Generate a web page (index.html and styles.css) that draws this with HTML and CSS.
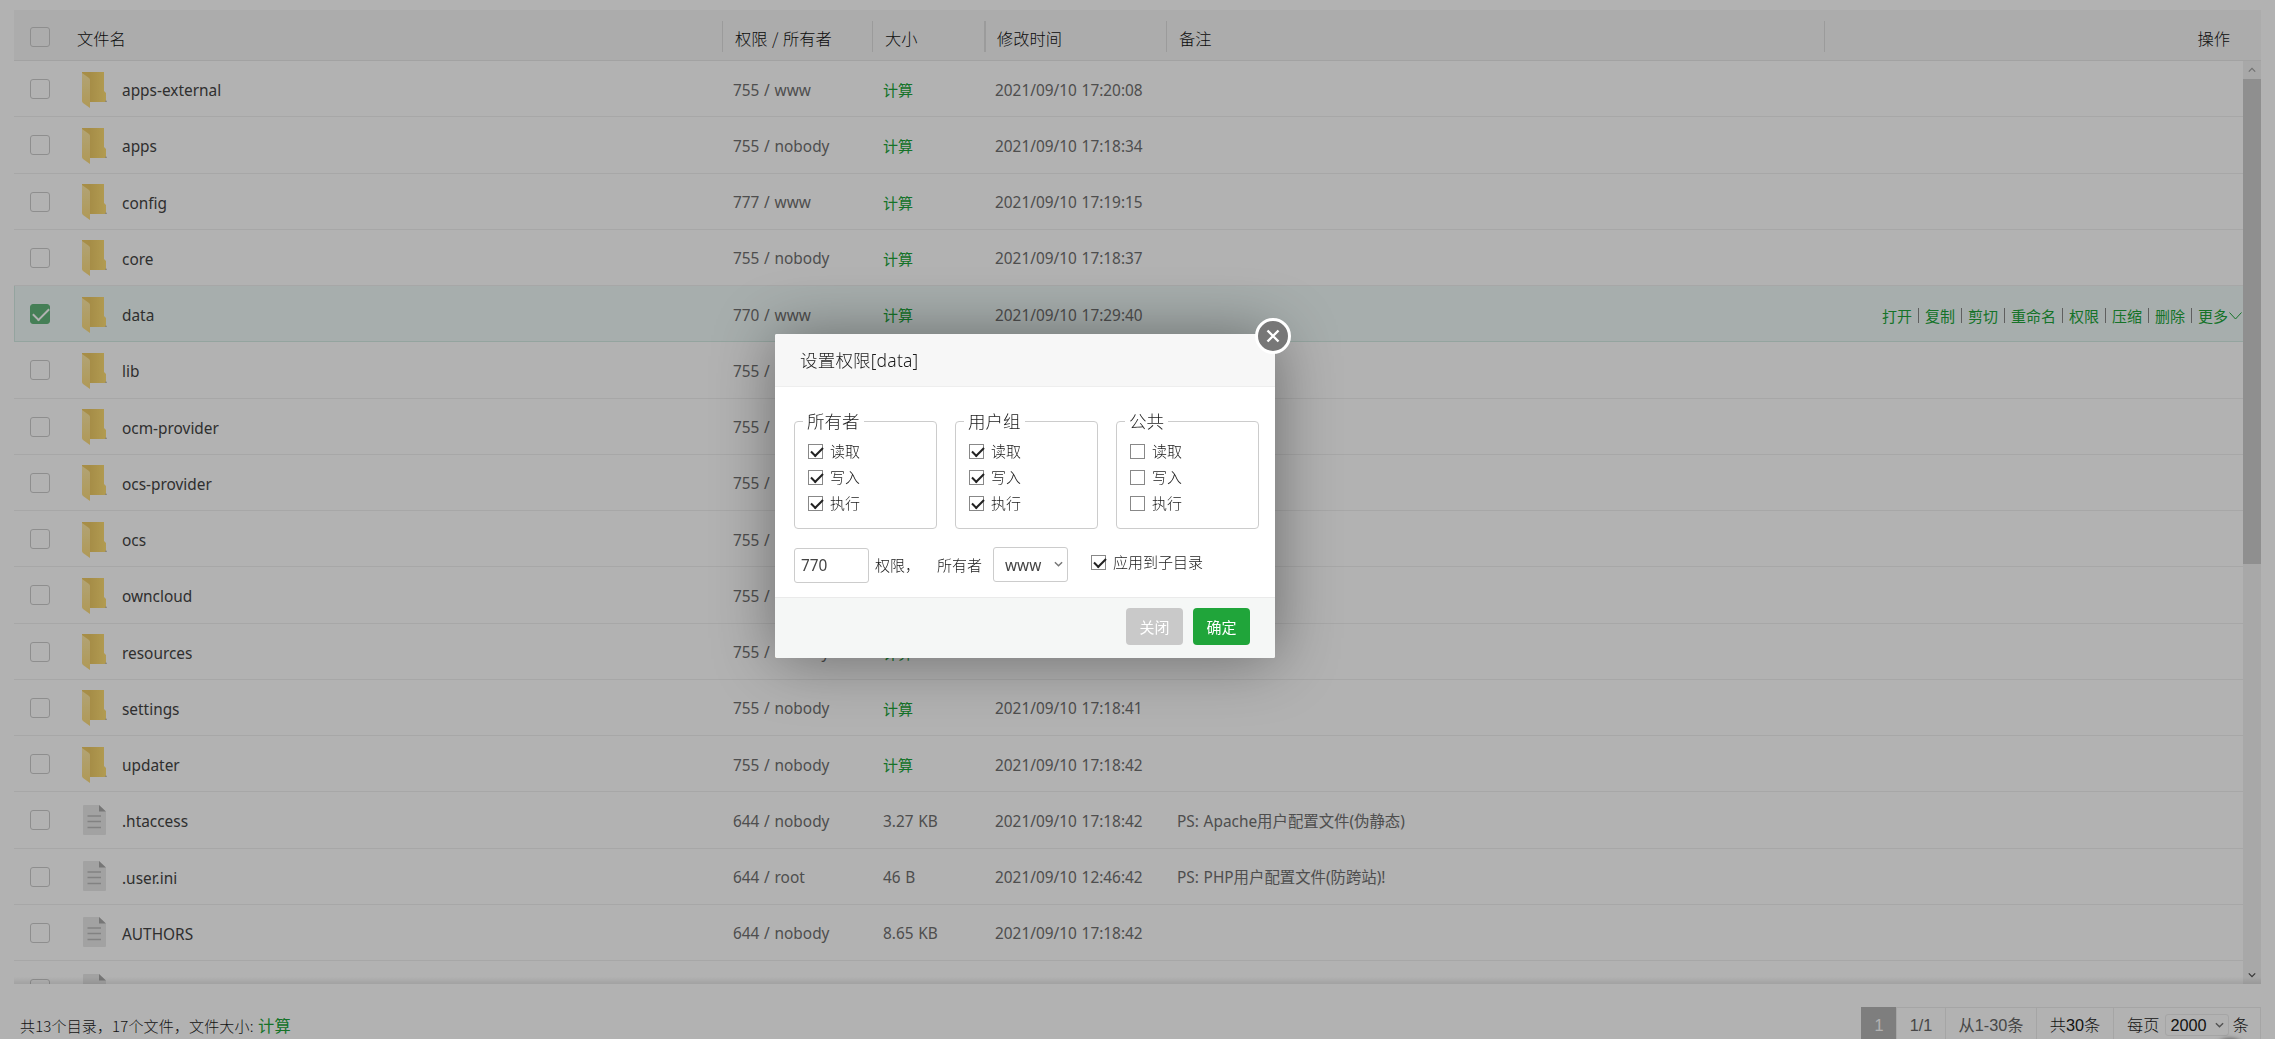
FILE: index.html
```html
<!DOCTYPE html>
<html lang="zh-CN">
<head>
    <meta charset="UTF-8">
    <meta name="viewport" content="width=device-width, initial-scale=1.0">
    <title>文件管理</title>
    <link rel="stylesheet" href="styles.css">
</head>
<body>
    <svg class="sprite" aria-hidden="true">
        <defs>
            <linearGradient id="folderBack" x1="0" y1="0" x2="1" y2="0">
                <stop offset="0" stop-color="#f0cc66"/>
                <stop offset="0.35" stop-color="#eecb66"/>
                <stop offset="1" stop-color="#ffdf76"/>
            </linearGradient>
            <linearGradient id="folderFront" x1="0" y1="0" x2="0" y2="1">
                <stop offset="0" stop-color="#ffeaa8"/>
                <stop offset="1" stop-color="#fbdb7c"/>
            </linearGradient>
        </defs>
        <symbol id="icon-folder" viewBox="0 0 25 36">
            <path fill="url(#folderBack)" d="M0 0H22V19L24 21V30H8L0 20Z"/>
            <path fill="url(#folderFront)" d="M0 1L7 6Q8 7 8 8V36L1 31Q0 30 0 29Z"/>
            <path fill="#bfb9a8" d="M24 28L25 30H23Z"/>
        </symbol>
        <symbol id="icon-file" viewBox="0 0 25 36">
            <path fill="#e8e8e8" d="M2 2H17L24 9V31Q24 32 23 32H2Q1 32 1 31V3Q1 2 2 2Z"/>
            <path fill="#aaa" d="M17 2L24 8.5H17Z"/>
            <path stroke="#bbb" stroke-width="1.5" d="M5.5 13H19M5.5 18.5H19M5.5 24.5H19"/>
        </symbol>
        <symbol id="icon-down" viewBox="0 0 10 6">
            <path fill="none" stroke="currentColor" stroke-width="1.6" d="M1 1L5 5L9 1"/>
        </symbol>
        <symbol id="icon-more" viewBox="0 0 13 8">
            <path fill="none" stroke="currentColor" d="M0.5 0.5L6.5 7L12.5 0.5"/>
        </symbol>
    </svg>

    <div class="file-page">
        <div class="file-table">
            <div class="file-row file-head">
                <div class="col-check"><input type="checkbox" class="check"></div>
                <div class="col-name">文件名</div>
                <div class="col">权限 / 所有者</div>
                <div class="col">大小</div>
                <div class="col col-time">修改时间</div>
                <div class="col">备注</div>
                <div class="col col-action">操作</div>
            </div>
            <div class="file-scroll">
                <div class="file-list" id="fileList"></div>
                <div class="scrollbar">
                    <svg class="bar-arrow up"><use href="#icon-down"/></svg>
                    <div class="bar-thumb"></div>
                    <svg class="bar-arrow down"><use href="#icon-down"/></svg>
                </div>
            </div>
        </div>

        <div class="file-footer">
            <div class="file-total">共13个目录，17个文件，文件大小: <a class="link">计算</a></div>
            <div class="page">
                <span class="page-current">1</span>
                <span class="page-num">1/1</span>
                <span class="page-range">从1-30条</span>
                <span class="page-count">共30条</span>
                <span class="page-size">每页<span class="size-select">2000<svg><use href="#icon-down"/></svg></span>条</span>
            </div>
        </div>
        <div class="float-btn"></div>
    </div>

    <div class="mask"></div>

    <div class="layer">
        <div class="layer-title">设置权限[data]</div>
        <span class="layer-close">
            <svg viewBox="0 0 14 14"><path d="M1.5 1.5L12.5 12.5M12.5 1.5L1.5 12.5"/></svg>
        </span>
        <div class="layer-content">
            <div class="groups">
                <fieldset>
                    <legend>所有者</legend>
                    <label><input type="checkbox" class="box" checked>读取</label>
                    <label><input type="checkbox" class="box" checked>写入</label>
                    <label><input type="checkbox" class="box" checked>执行</label>
                </fieldset>
                <fieldset>
                    <legend>用户组</legend>
                    <label><input type="checkbox" class="box" checked>读取</label>
                    <label><input type="checkbox" class="box" checked>写入</label>
                    <label><input type="checkbox" class="box" checked>执行</label>
                </fieldset>
                <fieldset>
                    <legend>公共</legend>
                    <label><input type="checkbox" class="box">读取</label>
                    <label><input type="checkbox" class="box">写入</label>
                    <label><input type="checkbox" class="box">执行</label>
                </fieldset>
            </div>
            <div class="setting">
                <input type="text" class="access" value="770">
                <span class="access-label">权限，</span>
                <span class="owner-label">所有者</span>
                <span class="owner">www<svg><use href="#icon-down"/></svg></span>
                <label class="sub-dir"><input type="checkbox" class="box" checked>应用到子目录</label>
            </div>
        </div>
        <div class="layer-footer">
            <button class="btn btn-close">关闭</button>
            <button class="btn btn-ok">确定</button>
        </div>
    </div>

    <script src="script.js"></script>
</body>
</html>
```
FILE: styles.css
```css
* {
    box-sizing: border-box;
}

body {
    margin: 0;
    height: 1039px;
    overflow: hidden;
    background: #fff;
    color: #1a1a1a;
    font-family: "Noto Sans", "Noto Sans CJK SC", sans-serif;
    font-size: 15px;
}

.sprite {
    position: absolute;
    width: 0;
    height: 0;
}

.link {
    color: #20a53a;
}

.file-page {
    padding: 10px 14px 0;
}

/* file table */
.file-table {
    width: 2247px;
    height: 974px;
    overflow: hidden;
}

.file-row {
    display: grid;
    grid-template-columns: 63px 645px 150px 112px 182px 658px 1fr;
    align-items: center;
    height: 56.25px;
    border-bottom: 1px solid #efefef;
    color: #707070;
    font-size: 15.4px;
    line-height: 24px;
}

.file-head {
    height: 51px;
    background: #f6f6f6;
    border-bottom: 1px solid #e8e8e8;
    color: #111;
    font-size: 16.25px;
    font-family: "Noto Sans CJK SC", sans-serif;
    font-weight: 300;
    word-spacing: 1px;
}

.file-head .col {
    align-self: start;
    height: 31px;
    margin-top: 11px;
    padding: 2px 0 0 12px;
    border-left: 1px solid #dfdfdf;
    line-height: 31px;
}

.file-head .col-name {
    padding-top: 5px;
}

.file-head .col-time {
    padding-left: 11px;
    border-left: 2px solid #dfdfdf;
}

.file-head .col-action {
    padding-right: 31px;
    text-align: right;
}

.col-check {
    padding-left: 16px;
}

.check {
    appearance: none;
    display: block;
    width: 20px;
    height: 20px;
    margin: 3px 0 0;
    border: 1px solid #ccc;
    border-radius: 3px;
}

.file-list .check {
    margin-top: 1px;
}

.check:checked {
    background: #63b77b;
    border-color: #63b77b;
}

.check:checked::after {
    content: "";
    display: block;
    width: 14px;
    height: 7px;
    margin: 3px 0 0 2px;
    border: solid #fff;
    border-width: 0 0 2px 2px;
    transform: rotate(-45deg);
}

.file-scroll {
    position: relative;
    display: flex;
    height: 923px;
    overflow: hidden;
}

.file-scroll::after {
    content: "";
    position: absolute;
    left: 0;
    right: 0;
    bottom: 0;
    height: 7px;
    background: linear-gradient(rgba(0, 0, 0, 0), rgba(0, 0, 0, 0.09));
}

.file-list {
    flex: 1;
}

.file-list .col {
    padding: 4px 0 0 11px;
    white-space: nowrap;
    word-spacing: 0.7px;
}

.file-list .file-name {
    display: flex;
    align-items: center;
    gap: 15px;
    padding: 2px 0 0 5px;
    color: #444;
}

.file-name svg {
    width: 25px;
    height: 36px;
}

.file-name span {
    padding-top: 3px;
}

.file-list .link {
    font-size: 15px;
}

.file-list .col-action {
    display: flex;
    align-items: center;
    justify-content: flex-end;
    padding: 4px 1px 0 0;
    font-size: 15px;
    font-family: "Noto Sans CJK SC", sans-serif;
}

.col-action i {
    width: 1px;
    height: 15px;
    margin: 0 6px;
    background: #888;
}

.col-action svg {
    width: 13px;
    height: 8px;
    margin-left: 1px;
    color: #20a53a;
}

.file-row.active {
    background: #f0faf8;
    border-bottom-color: #d5ebe4;
    box-shadow: inset 1px 0 #d5ebe4;
}

.scrollbar {
    display: flex;
    flex-direction: column;
    width: 18px;
    background: #f1f1f1;
}

.bar-arrow {
    width: 8px;
    height: 6px;
    margin: 6px 5px;
    color: #505050;
}

.bar-arrow.up {
    color: #a3a3a3;
    transform: rotate(180deg);
}

.bar-arrow.down {
    margin-top: auto;
}

.bar-thumb {
    height: 485px;
    background: #cdcdcd;
}

/* footer */
.file-footer {
    display: flex;
    justify-content: space-between;
    align-items: flex-start;
    width: 2247px;
    margin-top: 23px;
}

.file-total {
    padding: 6px 0 0 6px;
    font-family: "Noto Sans CJK SC", sans-serif;
    font-weight: 300;
    letter-spacing: 0.15px;
    line-height: 24px;
}

.file-total .link {
    margin-left: 1px;
    font-size: 16.25px;
    font-weight: 400;
}

.page {
    display: flex;
    height: 40px;
    border: 1px solid #ececec;
    border-left: 0;
    font-family: "Liberation Sans", "Noto Sans CJK SC", sans-serif;
    font-size: 16.25px;
    line-height: 35px;
}

.page > span {
    border-left: 1px solid #ececec;
    text-align: center;
}

.page .page-current {
    width: 35px;
    margin-top: -1px;
    background: #b5b5b5;
    border-color: #b5b5b5;
    color: #fff;
    line-height: 37px;
}

.page-num {
    width: 49px;
    color: #666;
}

.page-range {
    width: 91px;
    color: #666;
}

.page-count {
    width: 77px;
}

.page-count,
.page-size {
    font-weight: 300;
}

.page .page-size {
    display: flex;
    width: 147px;
    padding-left: 13px;
}

.size-select {
    display: flex;
    align-items: center;
    justify-content: space-between;
    width: 64px;
    height: 22px;
    margin: 6px 4px 0 5px;
    padding: 0 4px 0 5px;
    border: 1px solid #ececec;
    border-radius: 3px;
}

.size-select svg,
.owner svg {
    width: 9px;
    height: 6px;
    color: #777;
}

.float-btn {
    position: absolute;
    left: 2212px;
    top: 1039px;
    width: 36px;
    height: 36px;
    border-radius: 50%;
    box-shadow: 0 0 5px rgba(0, 0, 0, 0.6);
}

/* dialog */
.mask {
    position: fixed;
    inset: 0;
    background: rgba(0, 0, 0, 0.3);
}

.layer {
    position: fixed;
    left: 775px;
    top: 334px;
    width: 500px;
    height: 324px;
    background: #fff;
    border-radius: 2px;
    box-shadow: 1px 1px 62px rgba(0, 0, 0, 0.4);
    font-family: "Noto Sans CJK SC", sans-serif;
    font-weight: 300;
}

.layer-title {
    height: 53px;
    padding-left: 25px;
    background: #f7f7f7;
    border-bottom: 1px solid #eee;
    border-radius: 2px 2px 0 0;
    font-family: "Noto Sans", "Noto Sans CJK SC", sans-serif;
    font-size: 17.5px;
    letter-spacing: 0.2px;
    line-height: 52px;
}

.layer-close {
    position: absolute;
    right: -16px;
    top: -16px;
    display: flex;
    align-items: center;
    justify-content: center;
    width: 36px;
    height: 36px;
    border: 3px solid #fff;
    border-radius: 50%;
    background: #777;
}

.layer-close svg {
    width: 14px;
    height: 14px;
    fill: none;
    stroke: #fff;
    stroke-width: 2.4;
}

.layer-content {
    height: 210px;
    padding: 20px 14px 0 19px;
}

.groups {
    display: flex;
    gap: 18.5px;
}

fieldset {
    width: 142.5px;
    height: 122px;
    margin: 0;
    padding: 3px 0 0 13px;
    border: 1px solid #ccc;
    border-radius: 4px;
}

legend {
    margin-left: -5px;
    padding: 0 4px;
    font-size: 17.5px;
    line-height: 28px;
}

.layer label {
    display: flex;
    align-items: center;
    gap: 7px;
    height: 26px;
    line-height: 26px;
}

.box {
    appearance: none;
    width: 15px;
    height: 15px;
    margin: 0;
    border: 1.5px solid #555;
    background: #fff;
    outline: 0.5px solid #888;
    outline-offset: -1.5px;
}

.box:checked::after {
    content: "";
    display: block;
    width: 10px;
    height: 5px;
    margin: 2px 0 0 1.5px;
    border: solid #222;
    border-width: 0 0 2px 2px;
    transform: rotate(-45deg);
}

.setting {
    display: flex;
    align-items: center;
    height: 35px;
    margin-top: 19px;
}

.access {
    width: 75px;
    height: 35px;
    padding: 0 6px;
    border: 1px solid #ccc;
    border-radius: 3px;
    color: #444;
    font-family: "Noto Sans", sans-serif;
    font-size: 15.4px;
}

.access-label {
    width: 68px;
    padding-left: 6px;
    margin-top: -2px;
}

.owner-label {
    width: 56px;
    margin-top: -2px;
}

.owner {
    display: flex;
    align-items: center;
    justify-content: space-between;
    width: 75px;
    height: 35px;
    margin-top: -2px;
    padding: 2px 4px 0 11px;
    border: 1px solid #ccc;
    border-radius: 3px;
    color: #444;
    font-family: "Noto Sans", sans-serif;
    font-size: 15.4px;
    font-weight: 400;
}

.owner svg {
    margin-top: -4px;
}

.setting .sub-dir {
    margin: -7px 0 0 23px;
}

.layer-footer {
    display: flex;
    justify-content: flex-end;
    gap: 10px;
    height: 61px;
    padding: 10px 25px 0 0;
    background: #f5f7f6;
    border-top: 1px solid #eaeaea;
    border-radius: 0 0 2px 2px;
}

.btn {
    width: 57px;
    height: 37px;
    padding: 0;
    border: 0;
    border-radius: 4px;
    color: #fff;
    font-family: inherit;
    font-size: 15px;
}

.btn-close {
    background: #c9c9c9;
}

.btn-ok {
    background: #20a53a;
}
```
FILE: script.js
```js
const files = [
    ['apps-external', '755 / www', '', '17:20:08'],
    ['apps', '755 / nobody', '', '17:18:34'],
    ['config', '777 / www', '', '17:19:15'],
    ['core', '755 / nobody', '', '17:18:37'],
    ['data', '770 / www', '', '17:29:40'],
    ['lib', '755 / nobody', '', '17:18:41'],
    ['ocm-provider', '755 / nobody', '', '17:18:41'],
    ['ocs-provider', '755 / nobody', '', '17:18:41'],
    ['ocs', '755 / nobody', '', '17:18:41'],
    ['owncloud', '755 / nobody', '', '17:18:41'],
    ['resources', '755 / nobody', '', '17:18:41'],
    ['settings', '755 / nobody', '', '17:18:41'],
    ['updater', '755 / nobody', '', '17:18:42'],
    ['.htaccess', '644 / nobody', '3.27 KB', '17:18:42', 'PS: Apache用户配置文件(伪静态)'],
    ['.user.ini', '644 / root', '46 B', '12:46:42', 'PS: PHP用户配置文件(防跨站)!'],
    ['AUTHORS', '644 / nobody', '8.65 KB', '17:18:42'],
    ['', '', ' ', '']
];

const actions = ['打开', '复制', '剪切', '重命名', '权限', '压缩', '删除', '更多']
    .map(text => `<a class="link">${text}</a>`)
    .join('<i></i>') + '<svg><use href="#icon-more"/></svg>';

document.getElementById('fileList').innerHTML = files.map(([name, access, size, time, note]) => {
    const active = name === 'data';
    return `
        <div class="file-row${active ? ' active' : ''}">
            <div class="col-check"><input type="checkbox" class="check"${active ? ' checked' : ''}></div>
            <div class="file-name"><svg><use href="#icon-${size ? 'file' : 'folder'}"/></svg><span>${name}</span></div>
            <div class="col">${access}</div>
            <div class="col">${size || '<a class="link">计算</a>'}</div>
            <div class="col">${time ? '2021/09/10 ' + time : ''}</div>
            <div class="col">${note || ''}</div>
            <div class="col col-action">${active ? actions : ''}</div>
        </div>`;
}).join('');
```
